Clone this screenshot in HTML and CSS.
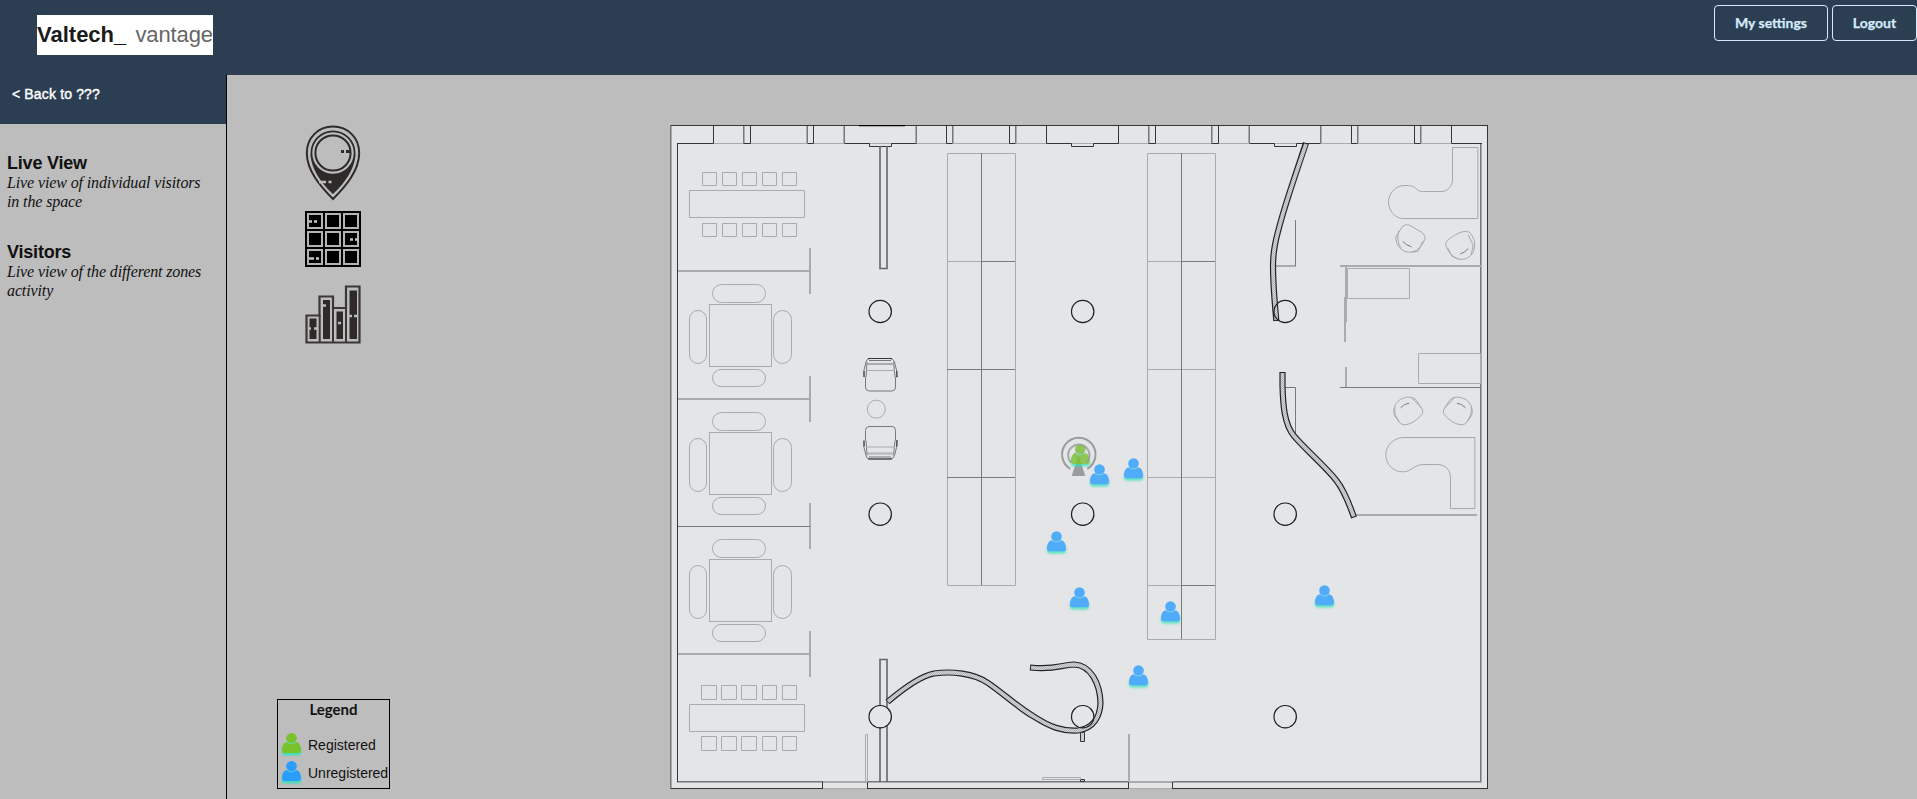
FILE: index.html
```html
<!DOCTYPE html>
<html lang="en">
<head>
<meta charset="utf-8">
<title>Valtech_ vantage</title>
<link rel="stylesheet" href="styles.css">
</head>
<body>
<svg class="defs" width="0" height="0" aria-hidden="true">
  <defs>
    <symbol id="person" viewBox="0 0 25 27" overflow="visible">
      <rect x="3" y="14" width="19" height="8.300" rx="3" class="glow"/>
      <path d="M3 17.500C3 12.500 4.800 9.400 8.200 8.900C10.500 11 14.500 11 16.800 8.900C20.200 9.400 22 12.500 22 17.500Q22 20 19.600 20H5.400Q3 20 3 17.500Z"/>
      <circle cx="12.500" cy="5.200" r="5.300"/>
      <path d="M8 9C10.300 11.200 14.700 11.200 17 9" class="neck"/>
    </symbol>
    <pattern id="hatch" width="2" height="2" patternUnits="userSpaceOnUse"><rect width="2" height="2" fill="#d2d3d4"/><rect width="1" height="1" fill="#b4b5b6"/><rect x="1" y="1" width="1" height="1" fill="#b4b5b6"/></pattern>
  </defs>
</svg>

<header class="topbar">
  <div class="logo"><b>Valtech_</b> <span>vantage</span></div>
  <nav class="actions"><a class="btn settings">My settings</a><a class="btn logout">Logout</a></nav>
</header>

<div class="layout">
  <aside class="sidebar">
    <a class="back">&lt; Back to ???</a>
    <section class="item">
      <h2>Live View</h2>
      <p>Live view of individual visitors<br>in the space</p>
    </section>
    <section class="item">
      <h2>Visitors</h2>
      <p>Live view of the different zones<br>activity</p>
    </section>
  </aside>

  <main class="content">
    <div class="tools">
      <div class="modes">
        <svg class="pin" width="56" height="76" viewBox="0 0 56 76" fill="none" stroke="#2d2a29">
          <path d="M28 1.500C43 1.500 54.200 13 54.200 28C54.200 46 40 62 28 74C16 62 1.800 46 1.800 28C1.800 13 13 1.500 28 1.500Z" stroke-width="2"/>
          <path d="M5.500 28C5.500 50 28 69 28 69S50.500 50 50.500 28C49 41 40 49 28 49S7 41 5.500 28Z" fill="#2d2a29" stroke="none"/>
          <circle cx="28" cy="28" r="21.600" stroke-width="1.800"/>
          <circle cx="28" cy="28" r="17.600" stroke-width="2"/>
          <path d="M36 26.500h3M41 26.500h4" stroke-width="3"/>
          <path d="M14 57h7M23.500 57h3" stroke="#bdbdbd" stroke-width="2.500"/>
        </svg>
        <svg class="grid" width="56" height="56" viewBox="0 0 56 56">
          <path d="M0 0H56V56H0Z" fill="#000"/>
          <path d="M3 3h14v14H3zM21 3h14v14H21zM39 3h14v14H39zM3 21h14v14H3zM21 21h14v14H21zM39 21h14v14H39zM3 39h14v14H3zM21 39h14v14H21zM39 39h14v14H39z" fill="#000" stroke="#b4b4b4" stroke-width="2"/>
          <path d="M4 10.500h3M9 10.500h3M45 28.500h3M50 28.500h3M4 47.500h5M11 47.500h3" stroke="#c4c4c4" stroke-width="2.600"/>
        </svg>
        <svg class="bars" width="56" height="60" viewBox="0 0 56 60">
          <path d="M1.500 30.500H14.500V11.500H28V23H41V1.500H54.500V57.500H1.500Z" fill="#bdbdbd" stroke="#3a3736" stroke-width="2.200"/>
          <path d="M14.700 30V57M28 22V57M41 22V57" stroke="#3a3736" stroke-width="2"/>
          <path d="M4.500 33.500h7v20.500h-7zM18 15h7v39h-7zM31.500 26.500h6.500v27.500h-6.500zM44.500 5.500h7.500v48.500h-7.500z" fill="#2d2a29"/>
          <path d="M4 43.500h2M9 43.500h3M17 20.500h4M33 38h3M44 31h3M49 31h3" stroke="#bdbdbd" stroke-width="2.300"/>
        </svg>
      </div>
      <div class="legend">
        <h3>Legend</h3>
        <div class="row"><svg class="green" width="25" height="27"><use href="#person" width="25" height="27"/></svg><span class="reg">Registered</span></div>
        <div class="row"><svg class="blue" width="25" height="27"><use href="#person" width="25" height="27"/></svg><span class="unreg">Unregistered</span></div>
      </div>
    </div>

    <svg class="plan" width="818" height="664" viewBox="670 125 818 664" fill="none">
      <rect x="670" y="125" width="818" height="664" fill="#e4e5e7"/>
      <!-- outer walls -->
      <path class="dark" d="M670 125.500H1488M1487.500 125V789M670 788.500H823M867 788.500H1128M1173 788.500H1488"/>
      <path class="mid" d="M670.500 125V789M1480.500 143V782M677 781.500H823M867 781.500H1128M1173 781.500H1481"/>
      <path class="light" d="M671.500 126V788M1481.500 143V783M677 782.500H1481M823 788.500H867M1128 788.500H1173M823 781.500H867M1128 781.500H1173"/>
      <path class="dark" d="M677.500 143V782M822.500 782V789M867.500 782V789M1128.500 782V789M1172.500 782V789"/>
      <path class="black" d="M859 125.500H905"/>
      <!-- window bays -->
      <path class="light" d="M713 143.500H1451"/>
      <path class="dark" d="M677 143.500H713.500V125M750.500 125V143.500H743M813.500 125V143.500H807M844 143.500H869.500V146.500H891.500V143.500H916M946.500 125V143.500H953M1009.500 125V143.500H1016M1046.500 125V143.500H1071.500V146.500H1093.500V143.500H1118.500V125M1155.500 125V143.500H1148M1218.500 125V143.500H1212M1249 143.500H1274.500V146.500H1296.500V143.500H1321M1351.500 125V143.500H1358M1414.500 125V143.500H1421M1451.500 125V143.500H1482"/>
      <path class="mid" d="M743.500 126V144M807.500 126V144M844.500 126V144M916.500 126V144M952.500 126V144M1015.500 126V144M1148.500 126V144M1211.500 126V144M1249.500 126V144M1320.500 126V144M1357.500 126V144M1420.500 126V144"/>
      <path class="light" d="M744.500 126V143M806.500 126V143M843.500 126V143M915.500 126V143M953.500 126V143M1016.500 126V143M1149.500 126V143M1212.500 126V143M1248.500 126V143M1321.500 126V143M1358.500 126V143M1421.500 126V143"/>
      <!-- left partitions -->
      <path class="light2" d="M678 271H810M678 399H810M678 654H810M810 248V294M810 376V422M810 503V549M810 631V677"/>
      <path class="mid" d="M678 526.500H810"/>
      <!-- conference tables -->
      <g class="light">
        <path d="M689.500 190.500H804.500V217.500H689.500ZM689.500 704.500H804.500V731.500H689.500Z"/>
        <path d="M702.500 172.500h14v13h-14zM722.500 172.500h14v13h-14zM742.500 172.500h14v13h-14zM762.500 172.500h14v13h-14zM782.500 172.500h14v13h-14zM702.500 223.500h14v13h-14zM722.500 223.500h14v13h-14zM742.500 223.500h14v13h-14zM762.500 223.500h14v13h-14zM782.500 223.500h14v13h-14z"/>
        <path d="M701.500 685.500h15v14h-15zM721.500 685.500h15v14h-15zM741.500 685.500h15v14h-15zM762.500 685.500h14v14h-14zM782.500 685.500h14v14h-14zM701.500 736.500h15v14h-15zM721.500 736.500h15v14h-15zM741.500 736.500h15v14h-15zM762.500 736.500h14v14h-14zM782.500 736.500h14v14h-14z"/>
        <g id="table">
          <rect x="709.500" y="304.500" width="62" height="62"/>
          <rect x="712.500" y="284.500" width="53" height="18" rx="9"/>
          <rect x="712.500" y="369.500" width="53" height="17" rx="8.500"/>
          <rect x="689.500" y="310.500" width="17" height="53" rx="8.500"/>
          <rect x="773.500" y="310.500" width="18" height="53" rx="9"/>
        </g>
        <use href="#table" y="128"/>
        <use href="#table" y="255"/>
      </g>
      <!-- straight interior walls -->
      <path class="beam" d="M880 146V268.500H887V146M880 782V659.500H887V782"/>
      <!-- desk rows -->
      <path class="light" d="M947.500 153.500H1015.500V585.500H947.500ZM947 261.500H981M1147.500 153.500H1215.500V639.500H1147.500ZM1147 261.500H1181M1147 369.500H1215M1147 477.500H1215M1147 585.500H1181"/>
      <path class="mid" d="M981.500 153V585M981 261.500H1015M947 369.500H1015M947 477.500H1015M1181.500 153V639M1181 261.500H1215M1181 585.500H1215"/>
      <!-- armchairs -->
      <g id="armchair">
        <path class="mid" d="M865.500 377V387Q865.500 391 869 391H892Q895.500 391 895.500 387V377"/>
        <path class="mid" d="M864 377V370L866 362Q866.500 358.500 870 358.500H890Q893.500 358.500 894.500 362L896.500 370V377H898M867 362L866 377M893.500 362L895 377"/>
        <path class="dark" d="M868 358.500H892M864 371V377M897 371V377"/>
        <path class="mid" d="M869 360.500H891"/>
        <path class="light" d="M867 363.500H894M867 364.500H894M866 370.500H895"/>
      </g>
      <use href="#armchair" transform="translate(0 817.500) scale(1 -1)"/>
      <circle class="light" cx="876.300" cy="409.200" r="9"/>
      <!-- right rooms -->
      <path class="light2" d="M1276 266H1296M1340 266H1481M1346 266V322M1345 297V342M1346 367V387M1356 515H1477"/>
      <path class="mid" d="M1295.500 220V266M1285 387.500H1295.500V433M1340 387.500H1481"/>
      <path class="light" d="M1347.500 268.500H1409.500V298.500H1347.500ZM1418.500 353.500H1480.500V383.500H1418.500Z"/>
      <g class="thin" transform="translate(1080.200 110.200) scale(.33333)">
        <path d="M1193 112V325H970C943 325 925 300 925 275C925 250 945 226 972 226H985C1007 226 1008 244 1027 244H1085C1102 244 1117 225 1117 210V112Z"/>
        <path d="M966 350C972 342 985 343 990 346L1024 366C1031 371 1036 380 1034 387C1030 400 1018 413 1011 418C995 430 975 428 962 416C950 405 945 390 948 378ZM956 362Q947 390 962 413M1028 393L1014 423L995 426"/>
        <path d="M1158 364C1142 362 1118 378 1106 387C1097 394 1094 400 1099 410C1105 428 1120 443 1136 447C1155 450 1173 440 1180 424C1186 405 1184 391 1176 377C1170 367 1166 364 1158 364ZM1103 414L1115 438L1136 447M1164 374L1179 405L1173 434"/>
        <path class="thinmid" d="M968 394Q978 405 994 410M1140 431Q1153 428 1164 415"/>
      </g>
      <g class="thin" transform="translate(1080.200 380.200) scale(.33333)">
        <path d="M1184 172H970C940 172 917 197 917 223C917 254 940 275 969 275C995 274 1000 253 1032 253H1070C1097 253 1111 270 1111 295V385H1184Z"/>
        <path d="M960 58C981 47 999 49 1009 61L1026 87C1029 94 1028 100 1022 106C1010 119 995 130 980 133C970 135 963 133 957 126L943 106C937 88 944 69 960 58ZM944 80Q940 103 957 124M994 52L1023 83"/>
        <path d="M1157 58C1136 47 1118 49 1108 61L1091 87C1088 94 1089 100 1095 106C1107 119 1122 130 1137 133C1147 135 1154 133 1160 126L1174 106C1180 88 1173 69 1157 58ZM1173 80Q1177 103 1160 124M1123 52L1094 83"/>
        <path class="thinmid" d="M961 83Q972 70 987 69M1156 83Q1145 70 1130 69"/>
      </g>
      <!-- curved walls -->
      <path class="wall" d="M1306 143C1297 170 1289 193 1282 217C1276 238 1273 250 1273 266C1273 287 1275 304 1276.300 321"/>
      <path class="wall" d="M1282.500 372V386C1283 404 1284 424 1294 436C1306 450 1325 466 1336 480C1344 490 1349 503 1354 517.500"/>
      <path class="wall" d="M887.500 702C904 688 920 676 934 673.500C951 671 974 673 988 683C1004 694 1019 708 1033 716C1050 727 1062 731.500 1078 730.500C1094 728 1100 716 1100.500 703C1100 684 1091 665 1074 664.500C1060 665 1056 670 1030 667.500"/>
      <path class="wallfill" d="M1306 144C1297 170 1289 193 1282 217C1276 238 1273 250 1273 266C1273 287 1275 304 1276.300 320"/>
      <path class="wallfill" d="M1282.500 373V386C1283 404 1284 424 1294 436C1306 450 1325 466 1336 480C1344 490 1349 503 1353.700 516.500"/>
      <path class="wallfill" d="M888 701.500C904 688 920 676 934 673.500C951 671 974 673 988 683C1004 694 1019 708 1033 716C1050 727 1062 731.500 1078 730.500C1094 728 1100 716 1100.500 703C1100 684 1091 665 1074 664.500C1060 665 1056 670 1031 667.600"/>
      <path class="dark" fill="#ccc" d="M1080.500 732.500H1084.500V741.500H1080.500ZM1080.500 779.500H1084.500V781.500H1080.500Z"/>
      <path class="light" d="M865.500 782V734.500H867.500V782M1042.500 777.500H1080.500V779.500H1042.500Z"/>
      <path class="light2" d="M1129 734V782"/>
      <!-- pillars -->
      <g class="pillar">
        <circle cx="880.200" cy="311.500" r="11.200"/><circle cx="1082.700" cy="311.500" r="11.200"/><circle cx="1285.200" cy="311.500" r="11.200"/>
        <circle cx="880.200" cy="514.200" r="11.200"/><circle cx="1082.700" cy="514.200" r="11.200"/><circle cx="1285.200" cy="514.200" r="11.200"/>
        <circle cx="880.200" cy="716.700" r="11.200" fill="#e4e5e7"/><circle cx="1082.700" cy="716.700" r="11.200"/><circle cx="1285.200" cy="716.700" r="11.200"/>
      </g>
      <!-- sensor and visitors -->
      <path d="M1078.500 455L1085.300 476H1071.700Z" fill="#999b9d"/>
      <g class="green faded"><use href="#person" x="1067.800" y="444" width="25" height="27"/></g>
      <g class="sensor">
        <path d="M1070.300 468.800A16.700 16.700 0 1 1 1087.300 468.800"/>
        <path d="M1071 462.500A10.700 10.700 0 1 1 1086.600 462.500" opacity=".8"/>
        <circle cx="1078.800" cy="454.500" r="4" opacity=".25"/>
      </g>
      <g class="blue faded">
        <use href="#person" x="1121" y="458.300" width="25" height="27"/>
        <use href="#person" x="1087" y="464.300" width="25" height="27"/>
        <use href="#person" x="1044" y="531.300" width="25" height="27"/>
        <use href="#person" x="1067" y="587.300" width="25" height="27"/>
        <use href="#person" x="1158" y="601.300" width="25" height="27"/>
        <use href="#person" x="1312" y="585.300" width="25" height="27"/>
        <use href="#person" x="1126" y="665.300" width="25" height="27"/>
      </g>
    </svg>
  </main>
</div>
</body>
</html>
```

FILE: styles.css
```css
* { box-sizing: border-box; }
body { margin: 0; height: 799px; overflow: hidden; background: #bdbdbd; color: #111; font-family: "Liberation Sans", Arial, sans-serif; }
.defs { position: absolute; }
.topbar { height: 75px; background: #2c3e52; display: flex; justify-content: space-between; align-items: flex-start; padding: 5px 0 0 37px; }
.logo { margin-top: 10px; width: 176px; height: 40px; background: #fff; font-size: 22px; line-height: 40px; white-space: nowrap; color: #666; display: flex; justify-content: space-between; }
.logo b { color: #1b1b1b; letter-spacing: 0; }
.logo span { letter-spacing: -.1px; }
.actions { display: flex; gap: 4px; }
.btn { height: 36px; border: 1px solid #d5ebfa; border-radius: 4px; color: #d5ebfa; font: bold 14px/34px Lato, sans-serif; text-align: center; -webkit-text-stroke: .25px #d5ebfa; }
.settings { width: 114px; }
.logout { width: 85px; }
.layout { display: flex; height: 724px; }
.sidebar { width: 227px; border-right: 1px solid #000; }
.back { display: block; height: 49px; background: #2c3e52; color: #fff; font-size: 14px; line-height: 38px; padding-left: 12px; letter-spacing: .15px; -webkit-text-stroke: .4px #fff; }
.item { padding-left: 7px; height: 89px; }
.back + .item { margin-top: 29px; }
.item h2 { margin: 0; font-size: 18px; line-height: 20px; letter-spacing: -.2px; }
.item p { margin: 0; font: italic 16px/19px "Liberation Serif", serif; letter-spacing: -.12px; white-space: nowrap; }
.content { flex: 1; display: flex; padding: 50px 0 10px 50px; }
.tools { width: 113px; display: flex; flex-direction: column; justify-content: space-between; }
.modes { display: flex; flex-direction: column; align-items: flex-start; padding-left: 28px; }
.modes svg { display: block; }
.grid { margin-top: 10px; }
.bars { margin-top: 18px; }
.legend { width: 113px; height: 90px; border: 1px solid #000; }
.legend h3 { margin: 0 0 14px; font: bold 15px/19px Lato, sans-serif; text-align: center; }
.row { display: flex; height: 28px; padding-left: 1px; font-size: 14px; line-height: 25px; white-space: nowrap; }
.row + .row { line-height: 24px; }
.row svg { flex: none; margin-right: 4px; overflow: visible; }
.plan { display: block; margin-left: 280px; flex: none; }

.green { fill: #78c32b; }
.blue { fill: #2b9dff; }
.faded { opacity: .8; }
.glow { fill: #31e3b6; filter: blur(1.300px); }
.neck { fill: none; stroke: #52d5d0; stroke-width: .8; }
.sensor { stroke: #999b9d; stroke-width: 2; }
.black { stroke: #000; stroke-width: 1.500; }
.dark { stroke: #333537; }
.mid { stroke: #77797b; }
.beam { stroke: #636567; stroke-width: 1.600; }
.light { stroke: #a9abad; }
.light2 { stroke: #a9abad; stroke-width: 2; }
.thin { stroke: #a5a7a9; stroke-width: 3; }
.thinmid { stroke: #77797b; }
.wall { stroke: #222426; stroke-width: 6.200; }
.wallfill { stroke: url(#hatch); stroke-width: 3.800; }
.pillar { stroke: #1c1e20; stroke-width: 1.200; }
```
